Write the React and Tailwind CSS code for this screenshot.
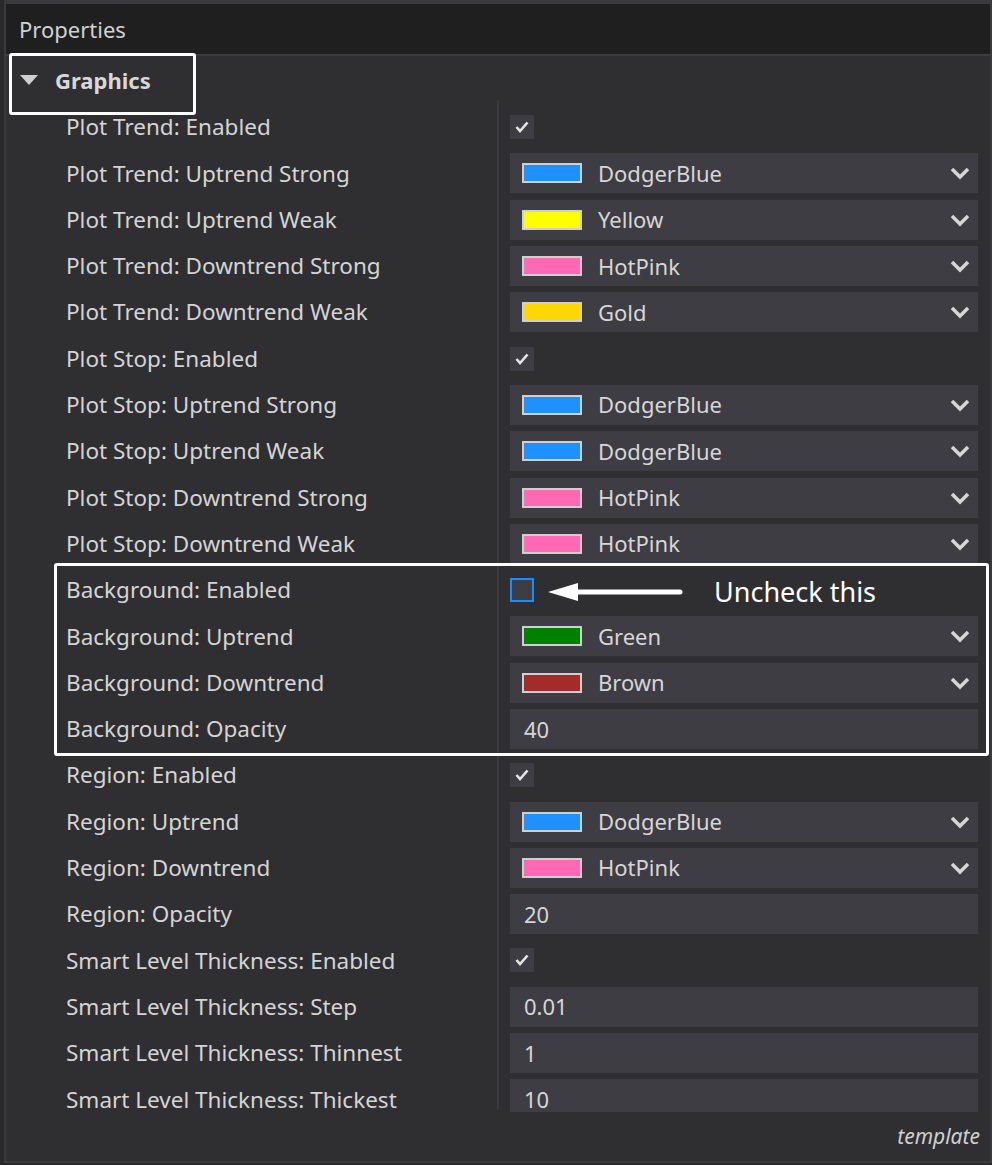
import React from "react";

const rows = [
  { label: "Plot Trend: Enabled", type: "check", checked: true },
  { label: "Plot Trend: Uptrend Strong", type: "color", color: "#1e90ff", name: "DodgerBlue" },
  { label: "Plot Trend: Uptrend Weak", type: "color", color: "#ffff00", name: "Yellow" },
  { label: "Plot Trend: Downtrend Strong", type: "color", color: "#ff69b4", name: "HotPink" },
  { label: "Plot Trend: Downtrend Weak", type: "color", color: "#ffd700", name: "Gold" },
  { label: "Plot Stop: Enabled", type: "check", checked: true },
  { label: "Plot Stop: Uptrend Strong", type: "color", color: "#1e90ff", name: "DodgerBlue" },
  { label: "Plot Stop: Uptrend Weak", type: "color", color: "#1e90ff", name: "DodgerBlue" },
  { label: "Plot Stop: Downtrend Strong", type: "color", color: "#ff69b4", name: "HotPink" },
  { label: "Plot Stop: Downtrend Weak", type: "color", color: "#ff69b4", name: "HotPink" },
  { label: "Background: Enabled", type: "check", checked: false, focus: true },
  { label: "Background: Uptrend", type: "color", color: "#008000", name: "Green" },
  { label: "Background: Downtrend", type: "color", color: "#a52a2a", name: "Brown" },
  { label: "Background: Opacity", type: "text", value: "40" },
  { label: "Region: Enabled", type: "check", checked: true },
  { label: "Region: Uptrend", type: "color", color: "#1e90ff", name: "DodgerBlue" },
  { label: "Region: Downtrend", type: "color", color: "#ff69b4", name: "HotPink" },
  { label: "Region: Opacity", type: "text", value: "20" },
  { label: "Smart Level Thickness: Enabled", type: "check", checked: true },
  { label: "Smart Level Thickness: Step", type: "text", value: "0.01" },
  { label: "Smart Level Thickness: Thinnest", type: "text", value: "1" },
  { label: "Smart Level Thickness: Thickest", type: "text", value: "10" },
];

function Chevron() {
  return (
    <svg width="20" height="14" viewBox="0 0 20 14">
      <path d="M2 3 L10 11 L18 3" fill="none" stroke="#d6d6d6" strokeWidth="3.5" />
    </svg>
  );
}

function Check({ checked, focus }) {
  return (
    <div
      className={
        "flex h-6 w-6 items-center justify-center bg-[#3e3d44] " +
        (focus ? "border-2 border-[#1a8cff]" : "")
      }
    >
      {checked && (
        <svg width="14" height="12" viewBox="0 0 14 12">
          <path d="M1.5 6 L5 10 L12.5 1.5" fill="none" stroke="#e6e6e6" strokeWidth="2.6" />
        </svg>
      )}
    </div>
  );
}

function Editor({ row }) {
  if (row.type === "check") return <Check checked={row.checked} focus={row.focus} />;
  if (row.type === "color")
    return (
      <div className="flex h-[40px] w-full items-center bg-[#3e3d44] pl-3 pr-[8px]">
        <div className="h-[20px] w-[60px] border-2 border-[#cfcfcf]" style={{ background: row.color }} />
        <span className="ml-4 flex-1 text-[22px] text-[#d6d6d6]">{row.name}</span>
        <Chevron />
      </div>
    );
  return (
    <div className="flex h-[40px] w-full items-center bg-[#3e3d44] pl-[14px]">
      <span className="text-[22px] text-[#d6d6d6]">{row.value}</span>
    </div>
  );
}

export default function App() {
  return (
    <div
      className="h-[1165px] w-[992px] overflow-hidden bg-[#29292b] pl-1 pb-[2px]"
      style={{ fontFamily: '"Noto Sans", "Open Sans", sans-serif' }}
    >
      <div className="relative flex h-full flex-col border-x-2 border-b-2 border-t-4 border-[#3a3a3d] bg-[#2f2f32]">
        <div className="flex h-[52px] items-center border-b-2 border-[#3d3d40] bg-[#1f1f1f] pl-[13px] pt-[1px] text-[22px] text-[#d2d2d2]">
          Properties
        </div>

        <div className="flex h-[44px] items-center pl-[14px] pt-[4px]">
          <svg width="18" height="11" viewBox="0 0 18 11">
            <path d="M0 0 L18 0 L9 10 Z" fill="#cfcfcf" />
          </svg>
          <span className="ml-[17px] text-[22px] font-bold text-[#d8d8d8]">Graphics</span>
        </div>

        <div className="relative h-[1012px] overflow-hidden">
          <div className="absolute left-[491px] top-0 h-[1009px] w-[2px] bg-[#3b3b3f]" />
          <div className="pt-[4px]">
            {rows.map((row, i) => (
              <div key={i} className="flex h-[46.3px] items-center">
                <div className="w-[504px] pl-[60px] text-[22.5px] text-[#d4d4d4]">{row.label}</div>
                <div className="flex w-[468px] items-center">
                  <Editor row={row} />
                </div>
              </div>
            ))}
          </div>
        </div>

        <div className="flex flex-1 items-center justify-end pr-[10px] text-[21px] italic text-[#cfcfcf]">
          template
        </div>

        <div className="absolute left-[3px] top-[49px] h-[62px] w-[187px] rounded-[3px] border-[3px] border-white" />
        <div className="absolute left-[48px] top-[559px] h-[193px] w-[935px] rounded-[3px] border-[3px] border-white" />

        <div className="absolute left-[542px] top-[570px] flex items-center">
          <svg width="136" height="20" viewBox="0 0 136 20">
            <path d="M0 10 L30 1 L30 19 Z" fill="#ffffff" />
            <line x1="28" y1="10" x2="132" y2="10" stroke="#ffffff" strokeWidth="5" strokeLinecap="round" />
          </svg>
          <span className="ml-[30px] text-[27px] leading-[36px] text-white">Uncheck this</span>
        </div>
      </div>
    </div>
  );
}
